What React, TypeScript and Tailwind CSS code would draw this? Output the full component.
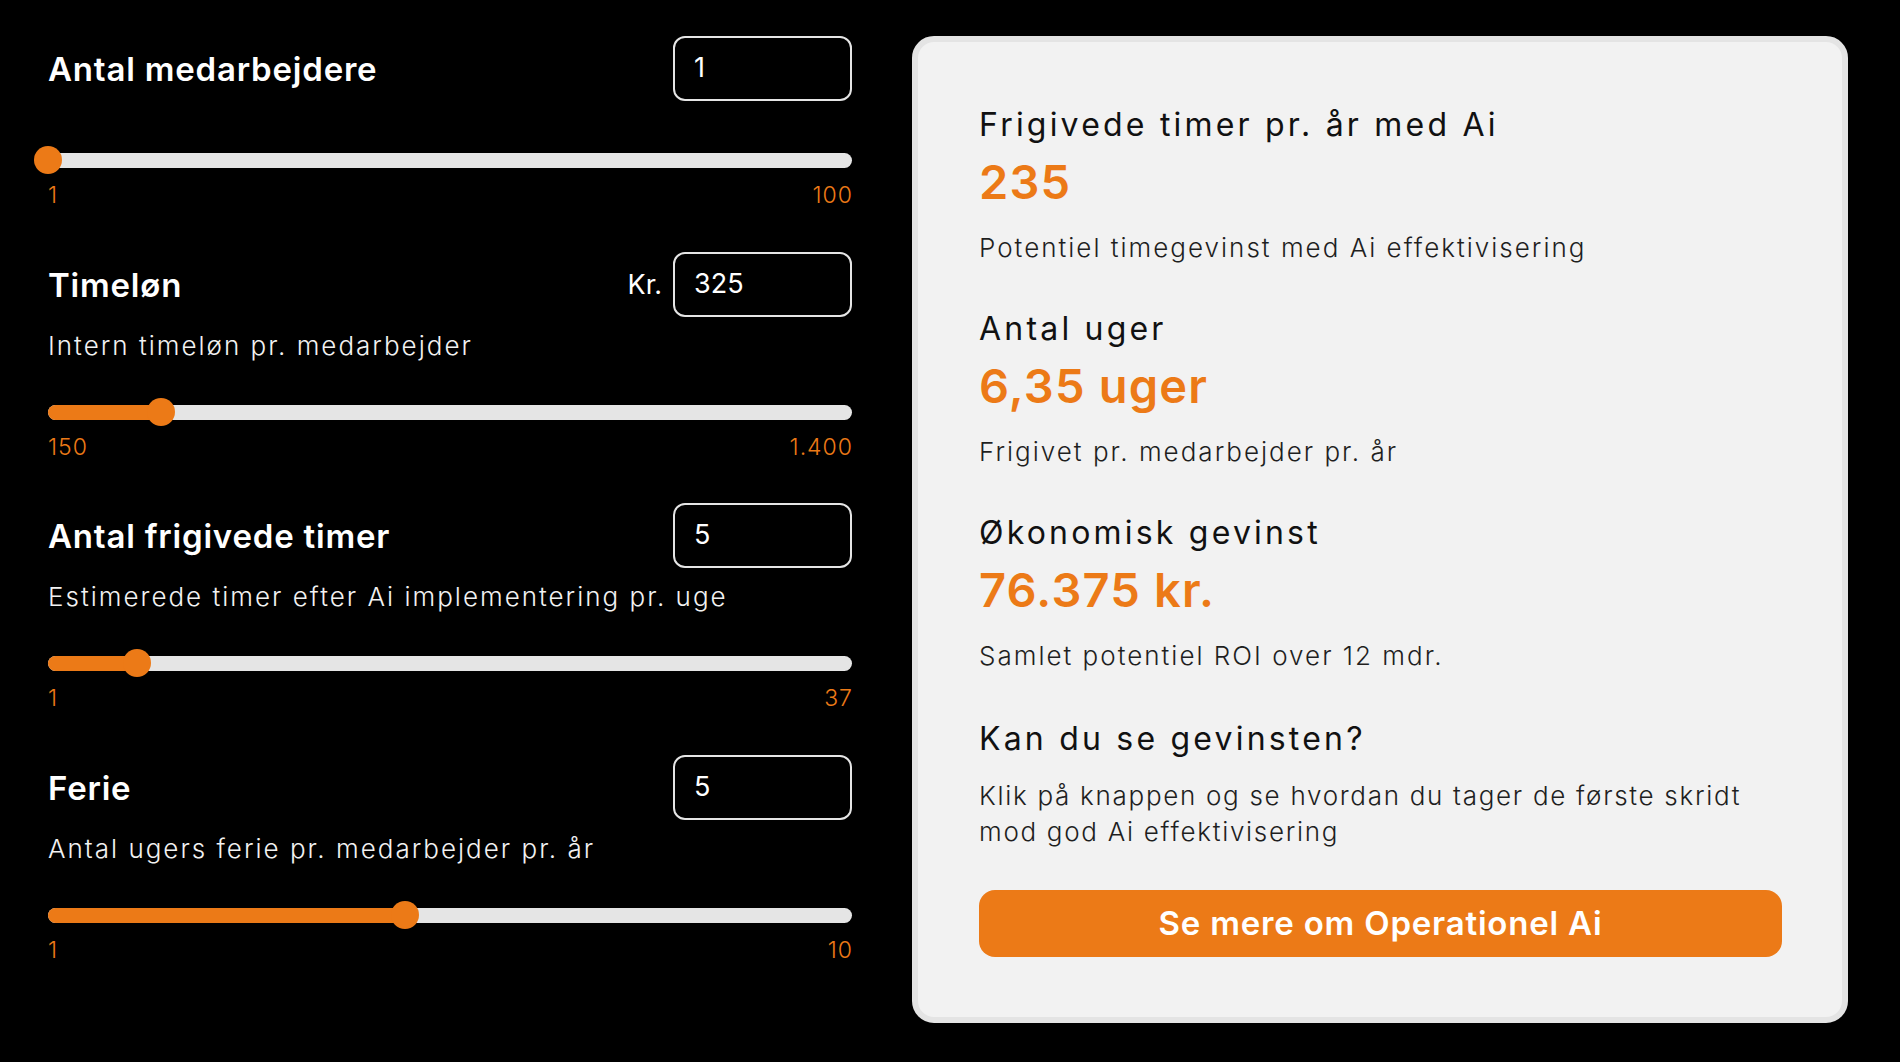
import React, { useState } from "react";

const FONT = { fontFamily: "Inter, 'Noto Sans', 'Liberation Sans', sans-serif" };

interface SliderProps {
  value: number;
  min: number;
  max: number;
  minLabel: string;
  maxLabel: string;
  first?: boolean;
}

function Slider({ value, min, max, minLabel, maxLabel, first }: SliderProps) {
  const pct = ((value - min) / (max - min)) * 100;

  return (
    <div className={first ? "mt-[45px]" : "mt-[36px]"}>
      <div className="flex h-[28px] items-center">
        <div className="relative h-[15px] w-full rounded-full bg-[#e5e5e5]">
          <div
            className="absolute left-0 top-0 h-full rounded-full bg-[#ec7a17]"
            style={{ width: `${pct}%` }}
          />
          <div
            className="absolute top-1/2 h-[28px] w-[28px] -translate-x-1/2 -translate-y-1/2 rounded-full bg-[#ec7a17]"
            style={{ left: `${pct}%` }}
          />
        </div>
      </div>
      <div className="mt-[8px] flex justify-between text-[23px] font-light leading-[26px] tracking-[1px] text-[#ec7a17]">
        <span>{minLabel}</span>
        <span className="-mr-[1px]">{maxLabel}</span>
      </div>
    </div>
  );
}

interface FieldProps {
  title: string;
  value: number;
  prefix?: string;
  description?: string;
  children: React.ReactNode;
  className?: string;
}

function Field({ title, value, prefix, description, children, className }: FieldProps) {
  return (
    <div className={className}>
      <div className="flex h-[65px] items-center justify-between">
        <h2 className="text-[33px] font-semibold leading-[40px] tracking-[0.8px] text-white">
          {title}
        </h2>
        <div className="flex items-center gap-[11px]">
          {prefix && <span className="text-[27px] leading-[34px] text-white">{prefix}</span>}
          <div className="flex h-[65px] w-[179px] items-center rounded-[12px] border-2 border-[#e5e5e5] px-[19px] text-[27px] text-white">
            {value}
          </div>
        </div>
      </div>
      {description && (
        <p className="mt-[13px] text-[26px] font-light leading-[32px] tracking-[2px] text-[#f2f2f2]">
          {description}
        </p>
      )}
      {children}
    </div>
  );
}

function Result({
  title,
  value,
  description,
  className,
}: {
  title: string;
  value: string;
  description: string;
  className?: string;
}) {
  return (
    <div className={className}>
      <h3 className="text-[32px] font-normal leading-[40px] tracking-[3.2px] text-[#111]">
        {title}
      </h3>
      <div className="mt-[9px] text-[47px] font-semibold leading-[56px] tracking-[1.2px] text-[#ec7a17]">
        {value}
      </div>
      <p className="mt-[22px] text-[26px] font-light leading-[32px] tracking-[2px] text-[#1f1f1f]">
        {description}
      </p>
    </div>
  );
}

export default function App() {
  const [employees] = useState(1);
  const [wage] = useState(325);
  const [hours] = useState(5);
  const [vacation] = useState(5);

  const yearlyHours = hours * (52 - vacation) * employees;
  const weeks = (yearlyHours / employees / 37).toFixed(2).replace(".", ",");
  const gain = (yearlyHours * wage).toLocaleString("da-DK");

  return (
    <div className="min-h-screen bg-black" style={FONT}>
      <div className="flex items-start gap-[60px] px-[48px] pt-[36px]">
        {/* Inputs */}
        <div className="w-[804px] shrink-0">
          <Field title="Antal medarbejdere" value={employees}>
            <Slider value={employees} min={1} max={100} minLabel="1" maxLabel="100" first />
          </Field>

          <Field
            className="mt-[44px]"
            title="Timeløn"
            prefix="Kr."
            value={wage}
            description="Intern timeløn pr. medarbejder"
          >
            <Slider value={wage} min={150} max={1400} minLabel="150" maxLabel="1.400" />
          </Field>

          <Field
            className="mt-[43px]"
            title="Antal frigivede timer"
            value={hours}
            description="Estimerede timer efter Ai implementering pr. uge"
          >
            <Slider value={hours} min={1} max={37} minLabel="1" maxLabel="37" />
          </Field>

          <Field
            className="mt-[44px]"
            title="Ferie"
            value={vacation}
            description="Antal ugers ferie pr. medarbejder pr. år"
          >
            <Slider value={vacation} min={1} max={10} minLabel="1" maxLabel="10" />
          </Field>
        </div>

        {/* Results */}
        <div className="w-[936px] shrink-0 rounded-[22px] border-[6px] border-[#e4e4e4] bg-[#f2f2f2] pb-[60px] pl-[61px] pr-[60px] pt-[63px]">
          <Result
            title="Frigivede timer pr. år med Ai"
            value={`${yearlyHours}`}
            description="Potentiel timegevinst med Ai effektivisering"
          />
          <Result
            className="mt-[45px]"
            title="Antal uger"
            value={`${weeks} uger`}
            description="Frigivet pr. medarbejder pr. år"
          />
          <Result
            className="mt-[45px]"
            title="Økonomisk gevinst"
            value={`${gain} kr.`}
            description="Samlet potentiel ROI over 12 mdr."
          />

          <h3 className="mt-[47px] text-[32px] font-normal leading-[40px] tracking-[3.2px] text-[#111]">
            Kan du se gevinsten?
          </h3>
          <p className="mt-[19px] text-[26px] font-light leading-[36px] tracking-[1.7px] text-[#1f1f1f]">
            Klik på knappen og se hvordan du tager de første skridt
            <br />
            mod god Ai effektivisering
          </p>

          <button className="mt-[40px] flex h-[67px] w-full items-center justify-center rounded-[16px] bg-[#ec7a17] text-[33px] font-semibold tracking-[0.8px] text-white">
            Se mere om Operationel Ai
          </button>
        </div>
      </div>
    </div>
  );
}
